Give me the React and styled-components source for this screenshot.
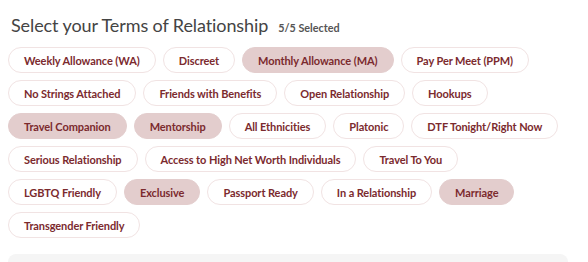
import React from 'react'
import styled, { createGlobalStyle } from 'styled-components'

const Global = createGlobalStyle`
  body {
    margin: 0;
    background: #fff;
    font-family: Lato, "Noto Sans", sans-serif;
  }
`

const Section = styled.div`
  padding: 14px 8px 0 8px;
  width: 588px;
  box-sizing: border-box;
`

const Header = styled.div`
  display: flex;
  align-items: baseline;
  gap: 10px;
  padding-left: 3px;
`

const Title = styled.h2`
  margin: 0;
  font-size: 18px;
  font-weight: 400;
  color: #444;
  letter-spacing: -0.1px;
`

const Count = styled.span`
  font-size: 10.8px;
  font-weight: 700;
  color: #555;
`

const Chips = styled.div`
  display: flex;
  flex-wrap: wrap;
  gap: 7px 7px;
  margin-top: 11px;
  width: 560px;
`

const Chip = styled.button`
  height: 26px;
  padding: 0 15px;
  border-radius: 13px;
  border: 1px solid ${p => (p.$active ? '#e3cdcd' : '#f1e3e3')};
  background: ${p => (p.$active ? '#e3cdcd' : '#fff')};
  color: #7b2a2e;
  font-family: Lato, "Noto Sans", sans-serif;
  font-size: 11px;
  font-weight: 700;
  letter-spacing: -0.08px;
  cursor: pointer;
`

const Footer = styled.div`
  margin-top: 16px;
  width: 560px;
  height: 20px;
  background: #f5f5f5;
  border-radius: 8px 8px 0 0;
`

const terms = [
  ['Weekly Allowance (WA)', false],
  ['Discreet', false],
  ['Monthly Allowance (MA)', true],
  ['Pay Per Meet (PPM)', false],
  ['No Strings Attached', false],
  ['Friends with Benefits', false],
  ['Open Relationship', false],
  ['Hookups', false],
  ['Travel Companion', true],
  ['Mentorship', true],
  ['All Ethnicities', false],
  ['Platonic', false],
  ['DTF Tonight/Right Now', false],
  ['Serious Relationship', false],
  ['Access to High Net Worth Individuals', false],
  ['Travel To You', false],
  ['LGBTQ Friendly', false],
  ['Exclusive', true],
  ['Passport Ready', false],
  ['In a Relationship', false],
  ['Marriage', true],
  ['Transgender Friendly', false],
]

const App = () => {
  return (
    <Section>
      <Global />
      <Header>
        <Title>Select your Terms of Relationship</Title>
        <Count>5/5 Selected</Count>
      </Header>
      <Chips>
        {terms.map(([label, active]) => (
          <Chip key={label} $active={active}>{label}</Chip>
        ))}
      </Chips>
      <Footer />
    </Section>
  )
}

export default App
